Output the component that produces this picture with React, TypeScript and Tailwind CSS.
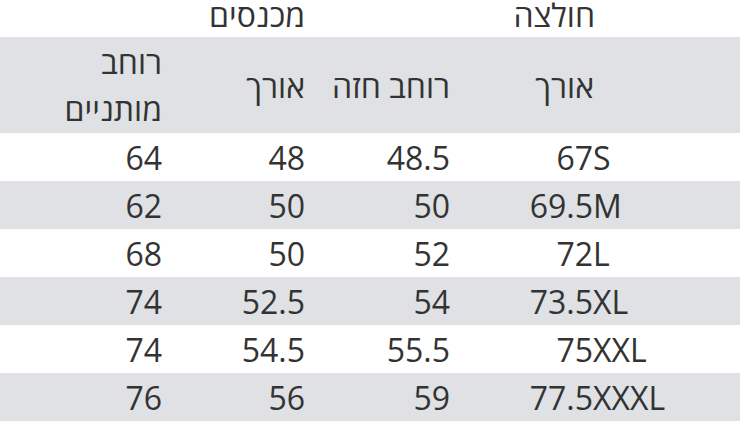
import React from "react";

const rows = [
  { size: "S", len: "67", chest: "48.5", pLen: "48", waist: "64" },
  { size: "M", len: "69.5", chest: "50", pLen: "50", waist: "62" },
  { size: "L", len: "72", chest: "52", pLen: "50", waist: "68" },
  { size: "XL", len: "73.5", chest: "54", pLen: "52.5", waist: "74" },
  { size: "XXL", len: "75", chest: "55.5", pLen: "54.5", waist: "74" },
  { size: "XXXL", len: "77.5", chest: "59", pLen: "56", waist: "76" },
];

export default function App() {
  return (
    <div
      dir="rtl"
      className="w-[740px] h-[422px] overflow-hidden bg-white text-[#333333] font-['Open_Sans',sans-serif]"
    >
      <table className="w-[740px] table-fixed border-collapse">
        <colgroup>
          <col className="w-[136px]" />
          <col className="w-[144px]" />
          <col className="w-[145px]" />
          <col className="w-[143px]" />
          <col className="w-[144px]" />
          <col className="w-[28px]" />
        </colgroup>
        <tbody>
          <tr className="h-[37px] text-[32px] leading-[30px]">
            <td />
            <td colSpan={2} className="pr-[9px] text-right align-top">
              חולצה
            </td>
            <td colSpan={2} className="pr-[10px] text-right align-top">
              מכנסים
            </td>
            <td />
          </tr>
          <tr className="h-[96px] bg-[#dfe1e5] text-[32px] leading-[47px]">
            <td />
            <td className="pr-[10px] text-right align-middle">אורך</td>
            <td className="pr-[10px] text-right align-middle whitespace-nowrap">רוחב חזה</td>
            <td className="pr-[10px] text-right align-middle">אורך</td>
            <td className="pr-[10px] text-right align-middle">
              רוחב
              <br />
              מותניים
            </td>
            <td />
          </tr>
          {rows.map((r, i) => (
            <tr
              key={r.size}
              className={`h-[48px] text-[32px] leading-[47px] ${i % 2 === 1 ? "bg-[#dfe1e5]" : "bg-white"}`}
            >
              <td />
              <td className="p-0 align-middle overflow-visible">
                <div dir="ltr" className="flex">
                  <span className="w-[133px] shrink-0 text-right">{r.len}</span>
                  <span className="shrink-0">{r.size}</span>
                </div>
              </td>
              <td className="pr-[10px] text-right align-middle">{r.chest}</td>
              <td className="pr-[10px] text-right align-middle">{r.pLen}</td>
              <td className="pr-[10px] text-right align-middle">{r.waist}</td>
              <td />
            </tr>
          ))}
        </tbody>
      </table>
    </div>
  );
}
